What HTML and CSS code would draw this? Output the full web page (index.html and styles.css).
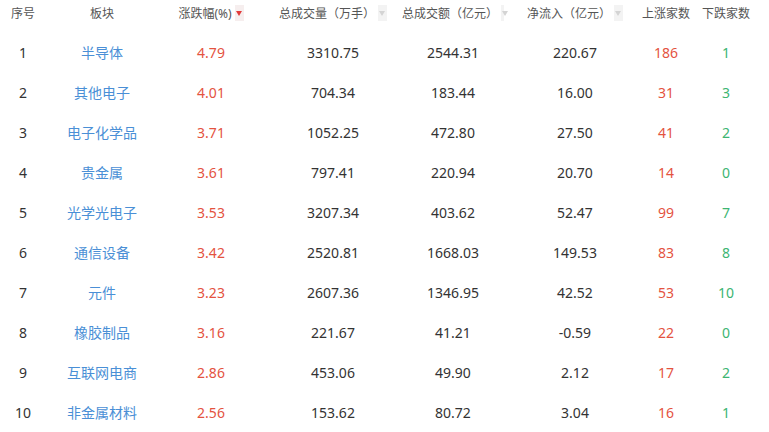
FILE: index.html
```html
<!DOCTYPE html>
<html lang="zh-CN">
<head>
    <meta charset="UTF-8">
    <meta name="viewport" content="width=device-width, initial-scale=1.0">
    <title>板块涨幅排行</title>
    <link rel="stylesheet" href="styles.css">
</head>
<body>
    <div class="board">
        <div class="row head">
            <div class="cell">序号</div>
            <div class="cell">板块</div>
            <div class="cell">涨跌幅(%)<span class="sort active"></span></div>
            <div class="cell">总成交量（万手）<span class="sort"></span></div>
            <div class="cell">总成交额（亿元）<span class="sort"></span></div>
            <div class="cell">净流入（亿元）<span class="sort"></span></div>
            <div class="cell">上涨家数</div>
            <div class="cell">下跌家数</div>
        </div>
        <div id="rows"></div>
    </div>

    <script>
        // 板块数据
        const data = [
            [1, '半导体', '4.79', '3310.75', '2544.31', '220.67', 186, 1],
            [2, '其他电子', '4.01', '704.34', '183.44', '16.00', 31, 3],
            [3, '电子化学品', '3.71', '1052.25', '472.80', '27.50', 41, 2],
            [4, '贵金属', '3.61', '797.41', '220.94', '20.70', 14, 0],
            [5, '光学光电子', '3.53', '3207.34', '403.62', '52.47', 99, 7],
            [6, '通信设备', '3.42', '2520.81', '1668.03', '149.53', 83, 8],
            [7, '元件', '3.23', '2607.36', '1346.95', '42.52', 53, 10],
            [8, '橡胶制品', '3.16', '221.67', '41.21', '-0.59', 22, 0],
            [9, '互联网电商', '2.86', '453.06', '49.90', '2.12', 17, 2],
            [10, '非金属材料', '2.56', '153.62', '80.72', '3.04', 16, 1]
        ];
        const classes = ['', 'name', 'up', '', '', '', 'up', 'down'];

        const rows = document.getElementById('rows');
        data.forEach(item => {
            const row = document.createElement('div');
            row.className = 'row';
            item.forEach((value, i) => {
                const cell = document.createElement('div');
                cell.className = 'cell ' + classes[i];
                cell.textContent = value;
                row.appendChild(cell);
            });
            rows.appendChild(row);
        });
    </script>
</body>
</html>
```

FILE: styles.css
```css
body {
    margin: 0;
    background-color: #fff;
    font-family: "Noto Sans", "Noto Sans CJK SC", sans-serif;
    color: #333;
}
.board {
    width: 769px;
}
.row {
    display: grid;
    grid-template-columns: 46px 112px 106px 138px 102px 142px 40px 80px;
    height: 40px;
    font-size: 14px;
}
.row.head {
    height: 26px;
    padding-bottom: 6px;
    font-size: 12px;
    color: #555;
}
.cell {
    display: flex;
    justify-content: center;
    align-items: center;
    white-space: nowrap;
}
.name {
    color: #4a8fd6;
}
.up {
    color: #e4533f;
}
.down {
    color: #3cb572;
}
.sort {
    position: relative;
    width: 9px;
    height: 16px;
    margin-left: 3px;
    background-color: #f3f3f3;
}
.sort::after {
    content: "";
    position: absolute;
    left: 1px;
    top: 6px;
    border-left: 3.5px solid transparent;
    border-right: 3.5px solid transparent;
    border-top: 5px solid #d4d4d4;
}
.sort.active {
    background-color: #f6eeee;
}
.sort.active::after {
    border-top-color: #e23b3b;
}
```
